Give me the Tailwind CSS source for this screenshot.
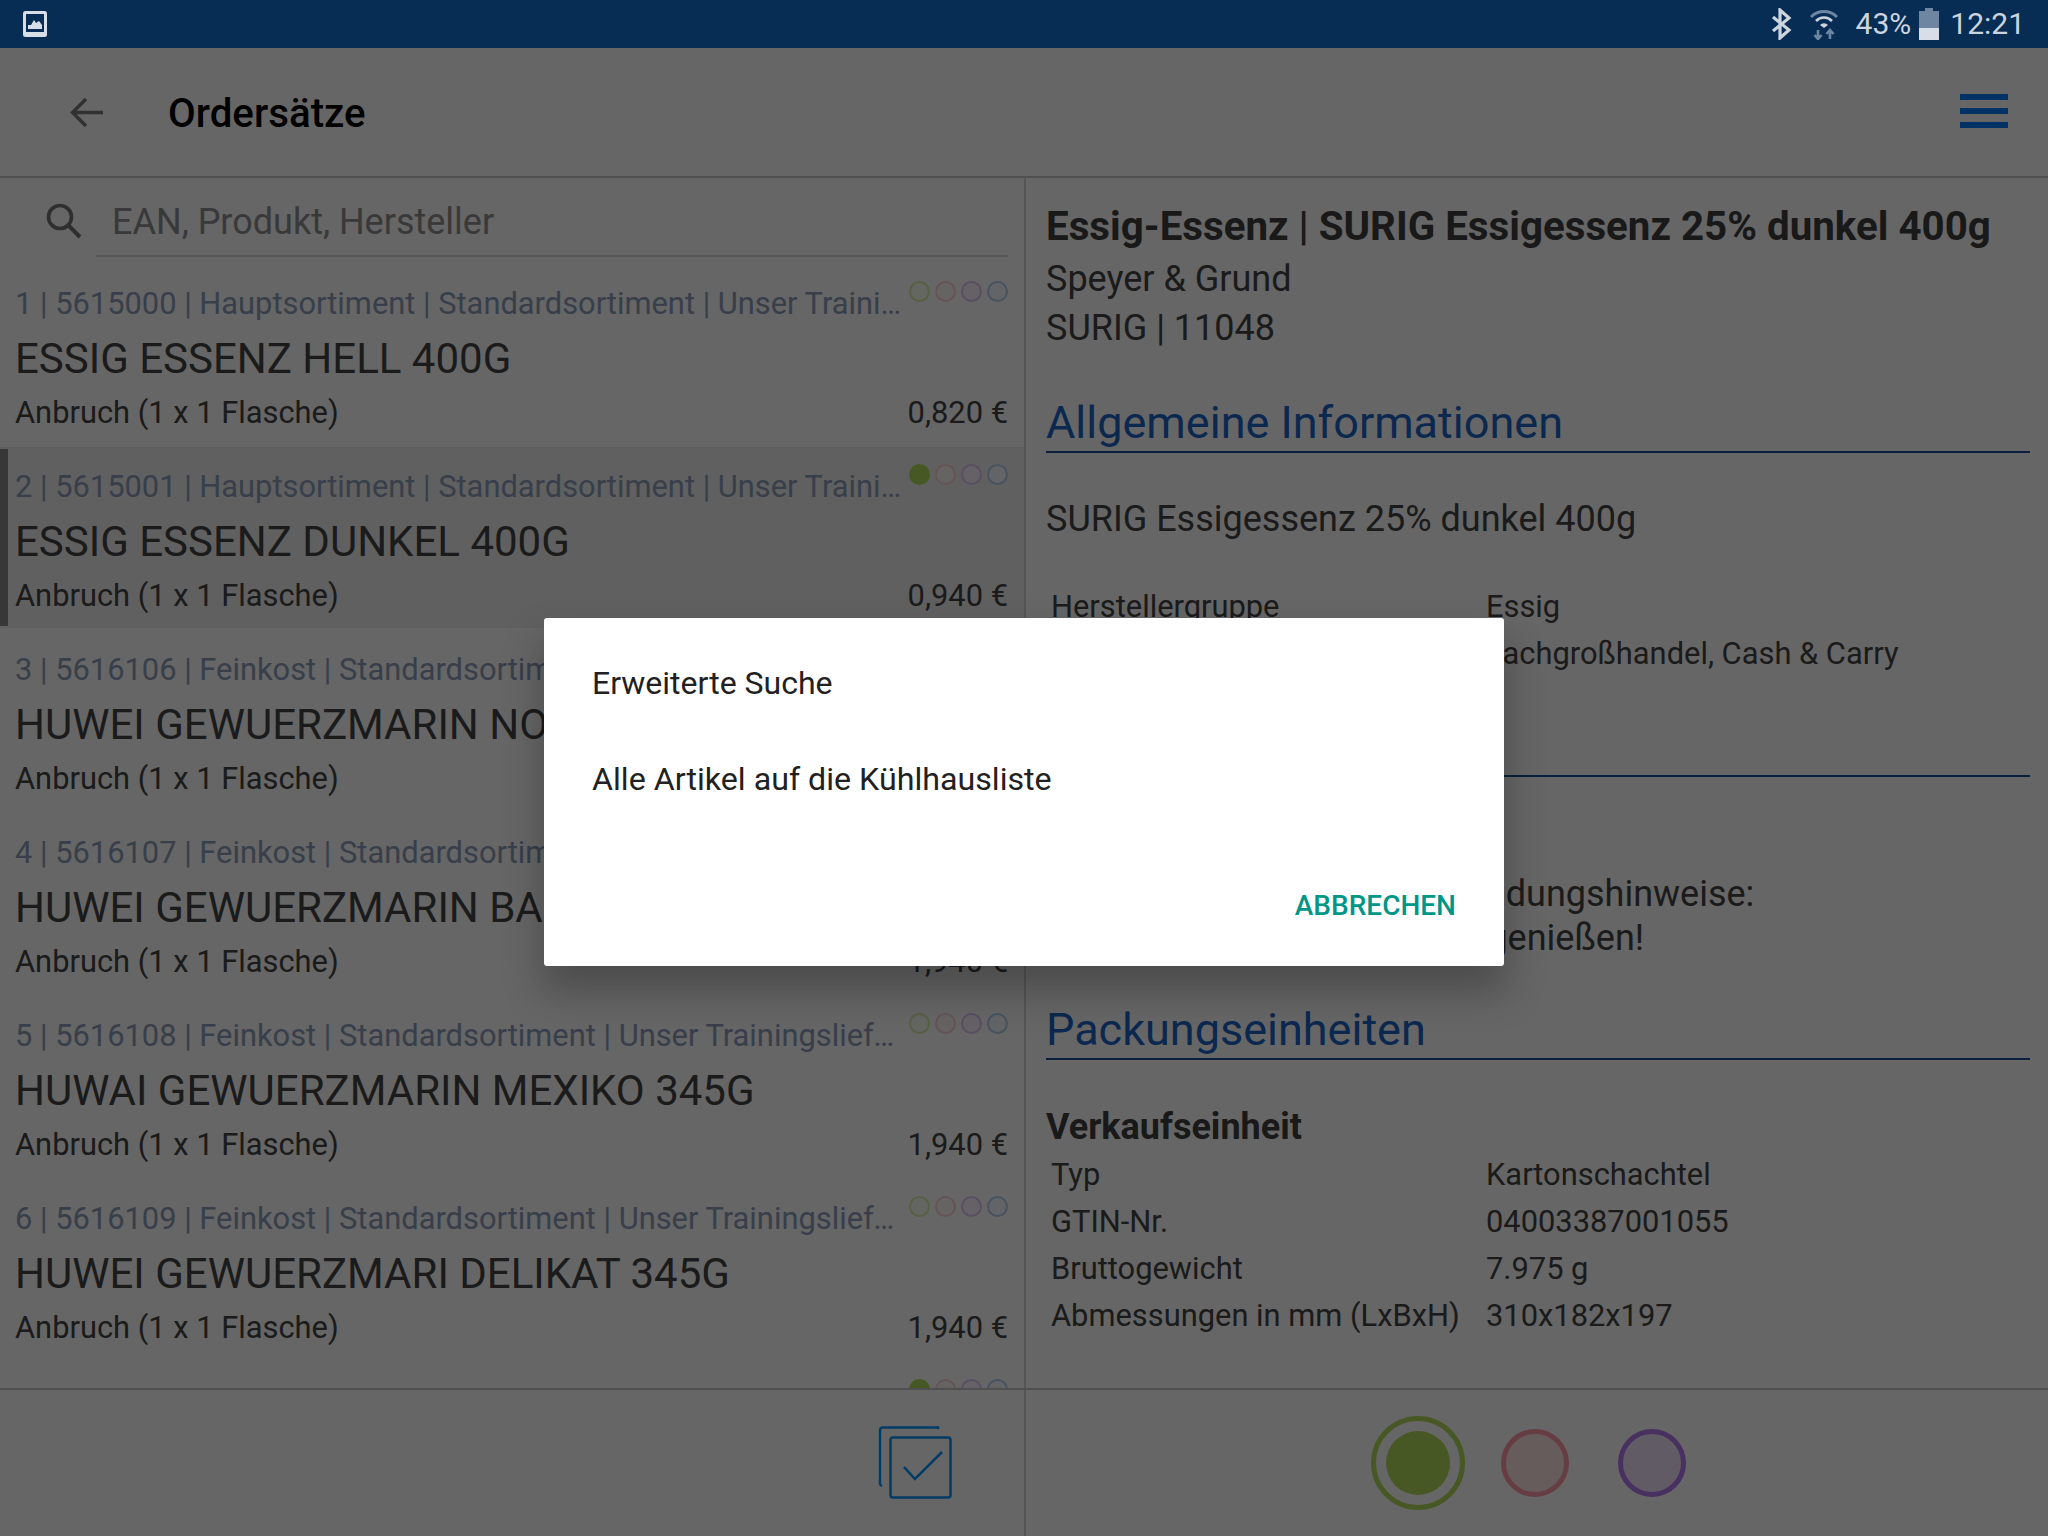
<!DOCTYPE html>
<html lang="de">
<head>
    <meta charset="UTF-8">
    <script src="https://cdn.jsdelivr.net/npm/@tailwindcss/browser@4"></script>
    <title>Ordersätze</title>
</head>
<body class="bg-white font-['Roboto',sans-serif]">
<div class="relative w-[2048px] h-[1536px] overflow-hidden flex flex-col bg-white">

    <!-- status bar -->
    <div class="relative z-20 h-[48px] shrink-0 bg-[#082d54] flex items-center pl-[23px] pr-[23px] text-[#ccd4de] text-[30px]">
        <svg class="w-[24px] h-[26px]" viewBox="0 0 24 26">
            <rect x="0" y="0" width="24" height="26" rx="2.5" fill="#d8dee8"/>
            <rect x="3" y="3" width="18" height="18" fill="#082d54"/>
            <path d="M5 18 L5 14 L8 14 L11 9 L13 12 L16 10 L19 14 L19 18 Z" fill="#d8dee8"/>
        </svg>
        <div class="ml-auto flex items-center">
            <svg class="w-[21px] h-[32px]" viewBox="0 0 21 32">
                <path d="M2 9 L18 22 L9 30 L9 2 L18 10 L2 23" fill="none" stroke="#ccd4de" stroke-width="3.2"/>
            </svg>
            <svg class="ml-[18px] w-[28px] h-[32px]" viewBox="0 0 28 32">
                <path d="M1 9 A18 18 0 0 1 27 9" fill="none" stroke="#6d87a3" stroke-width="3"/>
                <path d="M6 13 A11 11 0 0 1 22 13" fill="none" stroke="#ccd4de" stroke-width="2.6"/>
                <path d="M10 17 A5.5 5.5 0 0 1 18 17 L14 20 Z" fill="#ccd4de"/>
                <path d="M8 22 V30 M4.5 27 L8 31 L11.5 27" fill="none" stroke="#6d87a3" stroke-width="2.6"/>
                <path d="M20 31 V23 M16.5 26 L20 22 L23.5 26" fill="none" stroke="#6d87a3" stroke-width="2.6"/>
            </svg>
            <span class="ml-[18px] leading-none">43%</span>
            <div class="ml-[8px] w-[20px] h-[32px] flex flex-col items-center">
                <div class="w-[8px] h-[3px] bg-[#6f86a2]"></div>
                <div class="w-[20px] h-[17px] bg-[#6f86a2]"></div>
                <div class="w-[20px] h-[12px] bg-[#d8dee8]"></div>
            </div>
            <span class="ml-[11px] leading-none">12:21</span>
        </div>
    </div>

    <!-- app bar -->
    <div class="h-[130px] shrink-0 flex items-center border-b-2 border-[#c8c8c8] pr-[40px]">
        <svg class="ml-[70px] w-[33px] h-[31px]" viewBox="0 0 33 31">
            <path d="M33 15.5 H3 M16 2 L2.5 15.5 L16 29" fill="none" stroke="#7a7a7a" stroke-width="3.4"/>
        </svg>
        <h1 class="ml-[65px] mt-[5px] text-[40.300px] font-medium text-black leading-none">Ordersätze</h1>
        <div class="ml-auto w-[48px] flex flex-col gap-[8px] -mt-[3px]">
            <div class="h-[6px] bg-[#007dff]"></div>
            <div class="h-[6px] bg-[#007dff]"></div>
            <div class="h-[6px] bg-[#007dff]"></div>
        </div>
    </div>

    <!-- main -->
    <div class="h-[1212px] shrink-0 flex border-b-2 border-[#c8c8c8] min-h-0">
        <!-- list -->
        <div class="w-[1026px] shrink-0 border-r-2 border-[#d4d4d4] overflow-hidden">
            <div class="h-[86px] flex items-start pl-[46px] pr-[16px]">
                <svg class="mt-[25px] w-[36px] h-[36px] shrink-0" viewBox="0 0 36 36">
                    <circle cx="14" cy="14" r="11.5" fill="none" stroke="#777777" stroke-width="3.6"/>
                    <path d="M22.5 22.5 L34 34" stroke="#777777" stroke-width="4"/>
                </svg>
                <div class="ml-[14px] flex-1 h-[79px] border-b-2 border-[#d9d9d9] pl-[16px] pt-[23px] text-[36px] leading-[42px] text-[#8f8f8f]">EAN, Produkt, Hersteller</div>
            </div>
            <div>
                <div class="relative h-[183px] border-b-2 border-white pl-[15px] pr-[16px]">
                    <div class="flex justify-between items-start">
                        <div class="mt-[21px] w-[889px] truncate text-[30.850px] leading-[38px] text-[#8c9db8]">1 | 5615000 | Hauptsortiment | Standardsortiment | Unser Trainingslieferant</div>
                        <div class="mt-[17px] flex gap-[5px]">
                            <div class="w-[21px] h-[21px] rounded-full border-2 border-[#dcf0a8] bg-[#fafff5]"></div>
                            <div class="w-[21px] h-[21px] rounded-full border-2 border-[#ffd0d8] bg-[#fff8f8]"></div>
                            <div class="w-[21px] h-[21px] rounded-full border-2 border-[#e0c4f4] bg-[#fbf5ff]"></div>
                            <div class="w-[21px] h-[21px] rounded-full border-2 border-[#b4d0f0] bg-[#f5faff]"></div>
                        </div>
                    </div>
                    <div class="mt-[12px] text-[42px] leading-[48px] text-[#444444]">ESSIG ESSENZ HELL 400G</div>
                    <div class="mt-[11px] flex justify-between text-[30.850px] leading-[38px] text-[#444444]"><span>Anbruch (1 x 1 Flasche)</span><span>0,820 €</span></div>
                </div>
                <div class="relative h-[183px] border-b-2 border-white bg-[#f0f0f0] pl-[15px] pr-[16px]">
                    <div class="absolute left-0 top-[2px] bottom-[2px] w-[8px] bg-[#8a8a8a]"></div>
                    <div class="flex justify-between items-start">
                        <div class="mt-[21px] w-[889px] truncate text-[30.850px] leading-[38px] text-[#8c9db8]">2 | 5615001 | Hauptsortiment | Standardsortiment | Unser Trainingslieferant</div>
                        <div class="mt-[17px] flex gap-[5px]">
                            <div class="w-[21px] h-[21px] rounded-full bg-[#b4dc5a]"></div>
                            <div class="w-[21px] h-[21px] rounded-full border-2 border-[#ffd0d8] bg-[#fff8f8]"></div>
                            <div class="w-[21px] h-[21px] rounded-full border-2 border-[#e0c4f4] bg-[#fbf5ff]"></div>
                            <div class="w-[21px] h-[21px] rounded-full border-2 border-[#b4d0f0] bg-[#f5faff]"></div>
                        </div>
                    </div>
                    <div class="mt-[12px] text-[42px] leading-[48px] text-[#444444]">ESSIG ESSENZ DUNKEL 400G</div>
                    <div class="mt-[11px] flex justify-between text-[30.850px] leading-[38px] text-[#444444]"><span>Anbruch (1 x 1 Flasche)</span><span>0,940 €</span></div>
                </div>
                <div class="relative h-[183px] border-b-2 border-white pl-[15px] pr-[16px]">
                    <div class="flex justify-between items-start">
                        <div class="mt-[21px] w-[889px] truncate text-[30.850px] leading-[38px] text-[#8c9db8]">3 | 5616106 | Feinkost | Standardsortiment | Unser Trainingslieferant</div>
                        <div class="mt-[17px] flex gap-[5px]">
                            <div class="w-[21px] h-[21px] rounded-full border-2 border-[#dcf0a8] bg-[#fafff5]"></div>
                            <div class="w-[21px] h-[21px] rounded-full border-2 border-[#ffd0d8] bg-[#fff8f8]"></div>
                            <div class="w-[21px] h-[21px] rounded-full border-2 border-[#e0c4f4] bg-[#fbf5ff]"></div>
                            <div class="w-[21px] h-[21px] rounded-full border-2 border-[#b4d0f0] bg-[#f5faff]"></div>
                        </div>
                    </div>
                    <div class="mt-[12px] text-[42px] leading-[48px] text-[#444444]">HUWEI GEWUERZMARIN NORMAL 345G</div>
                    <div class="mt-[11px] flex justify-between text-[30.850px] leading-[38px] text-[#444444]"><span>Anbruch (1 x 1 Flasche)</span><span>1,940 €</span></div>
                </div>
                <div class="relative h-[183px] border-b-2 border-white pl-[15px] pr-[16px]">
                    <div class="flex justify-between items-start">
                        <div class="mt-[21px] w-[889px] truncate text-[30.850px] leading-[38px] text-[#8c9db8]">4 | 5616107 | Feinkost | Standardsortiment | Unser Trainingslieferant</div>
                        <div class="mt-[17px] flex gap-[5px]">
                            <div class="w-[21px] h-[21px] rounded-full border-2 border-[#dcf0a8] bg-[#fafff5]"></div>
                            <div class="w-[21px] h-[21px] rounded-full border-2 border-[#ffd0d8] bg-[#fff8f8]"></div>
                            <div class="w-[21px] h-[21px] rounded-full border-2 border-[#e0c4f4] bg-[#fbf5ff]"></div>
                            <div class="w-[21px] h-[21px] rounded-full border-2 border-[#b4d0f0] bg-[#f5faff]"></div>
                        </div>
                    </div>
                    <div class="mt-[12px] text-[42px] leading-[48px] text-[#444444]">HUWEI GEWUERZMARIN BALI 345G</div>
                    <div class="mt-[11px] flex justify-between text-[30.850px] leading-[38px] text-[#444444]"><span>Anbruch (1 x 1 Flasche)</span><span>1,940 €</span></div>
                </div>
                <div class="relative h-[183px] border-b-2 border-white pl-[15px] pr-[16px]">
                    <div class="flex justify-between items-start">
                        <div class="mt-[21px] w-[889px] truncate text-[30.850px] leading-[38px] text-[#8c9db8]">5 | 5616108 | Feinkost | Standardsortiment | Unser Trainingslieferant</div>
                        <div class="mt-[17px] flex gap-[5px]">
                            <div class="w-[21px] h-[21px] rounded-full border-2 border-[#dcf0a8] bg-[#fafff5]"></div>
                            <div class="w-[21px] h-[21px] rounded-full border-2 border-[#ffd0d8] bg-[#fff8f8]"></div>
                            <div class="w-[21px] h-[21px] rounded-full border-2 border-[#e0c4f4] bg-[#fbf5ff]"></div>
                            <div class="w-[21px] h-[21px] rounded-full border-2 border-[#b4d0f0] bg-[#f5faff]"></div>
                        </div>
                    </div>
                    <div class="mt-[12px] text-[42px] leading-[48px] text-[#444444]">HUWAI GEWUERZMARIN MEXIKO 345G</div>
                    <div class="mt-[11px] flex justify-between text-[30.850px] leading-[38px] text-[#444444]"><span>Anbruch (1 x 1 Flasche)</span><span>1,940 €</span></div>
                </div>
                <div class="relative h-[183px] border-b-2 border-white pl-[15px] pr-[16px]">
                    <div class="flex justify-between items-start">
                        <div class="mt-[21px] w-[889px] truncate text-[30.850px] leading-[38px] text-[#8c9db8]">6 | 5616109 | Feinkost | Standardsortiment | Unser Trainingslieferant</div>
                        <div class="mt-[17px] flex gap-[5px]">
                            <div class="w-[21px] h-[21px] rounded-full border-2 border-[#dcf0a8] bg-[#fafff5]"></div>
                            <div class="w-[21px] h-[21px] rounded-full border-2 border-[#ffd0d8] bg-[#fff8f8]"></div>
                            <div class="w-[21px] h-[21px] rounded-full border-2 border-[#e0c4f4] bg-[#fbf5ff]"></div>
                            <div class="w-[21px] h-[21px] rounded-full border-2 border-[#b4d0f0] bg-[#f5faff]"></div>
                        </div>
                    </div>
                    <div class="mt-[12px] text-[42px] leading-[48px] text-[#444444]">HUWEI GEWUERZMARI DELIKAT 345G</div>
                    <div class="mt-[11px] flex justify-between text-[30.850px] leading-[38px] text-[#444444]"><span>Anbruch (1 x 1 Flasche)</span><span>1,940 €</span></div>
                </div>
                <div class="relative h-[183px] pl-[15px] pr-[16px]">
                    <div class="flex justify-between items-start">
                        <div class="mt-[21px] w-[889px] truncate text-[30.850px] leading-[38px] text-[#8c9db8]">7 | 5616110 | Feinkost | Standardsortiment | Unser Trainingslieferant</div>
                        <div class="mt-[17px] flex gap-[5px]">
                            <div class="w-[21px] h-[21px] rounded-full bg-[#b4dc5a]"></div>
                            <div class="w-[21px] h-[21px] rounded-full border-2 border-[#ffd0d8] bg-[#fff8f8]"></div>
                            <div class="w-[21px] h-[21px] rounded-full border-2 border-[#e0c4f4] bg-[#fbf5ff]"></div>
                            <div class="w-[21px] h-[21px] rounded-full border-2 border-[#b4d0f0] bg-[#f5faff]"></div>
                        </div>
                    </div>
                </div>
            </div>
        </div>

        <!-- detail -->
        <div class="flex-1 min-w-0 overflow-hidden pl-[20px] pr-[18px] pt-[24px] text-[#444444]">
            <div class="text-[40.300px] leading-[49px] font-bold text-[#404040] whitespace-nowrap">Essig-Essenz | SURIG Essigessenz 25% dunkel 400g</div>
            <div class="mt-[4px] text-[36px] leading-[49px]">Speyer &amp; Grund</div>
            <div class="text-[36px] leading-[49px]">SURIG | 11048</div>
            <div class="mt-[40px] text-[45px] leading-[60px] text-[#1b64c8] border-b-2 border-[#1b4f98] h-[60px]">Allgemeine Informationen</div>
            <div class="mt-[45px] text-[36px] leading-[42px]">SURIG Essigessenz 25% dunkel 400g</div>
            <div class="mt-[43px] text-[30.850px] leading-[47px]">
                <div class="flex"><span class="w-[440px] pl-[5px]">Herstellergruppe</span><span>Essig</span></div>
                <div class="flex"><span class="w-[440px] pl-[5px]">Vertriebsweg</span><span>Fachgroßhandel, Cash &amp; Carry</span></div>
            </div>
            <div class="mt-[40px] text-[45px] leading-[60px] text-[#1b64c8] border-b-2 border-[#1b4f98] h-[60px]">Zusatzinformationen</div>
            <div class="mt-[95px] text-[36px] leading-[44px] whitespace-nowrap">
                <div>Aufbewahrungs- und Verwendungshinweise:</div>
                <div>Nach dem Anbruch zeitnah genießen!</div>
            </div>
            <div class="mt-[40px] text-[45px] leading-[60px] text-[#1b64c8] border-b-2 border-[#1b4f98] h-[60px]">Packungseinheiten</div>
            <div class="mt-[46px] text-[36px] leading-[42px] font-bold text-[#404040]">Verkaufseinheit</div>
            <div class="mt-[3px] text-[30.850px] leading-[47px]">
                <div class="flex"><span class="w-[440px] pl-[5px]">Typ</span><span>Kartonschachtel</span></div>
                <div class="flex"><span class="w-[440px] pl-[5px]">GTIN-Nr.</span><span>04003387001055</span></div>
                <div class="flex"><span class="w-[440px] pl-[5px]">Bruttogewicht</span><span>7.975 g</span></div>
                <div class="flex"><span class="w-[440px] pl-[5px]">Abmessungen in mm (LxBxH)</span><span>310x182x197</span></div>
            </div>
            <div class="mt-[49px] text-[36px] leading-[42px] font-bold text-[#404040] whitespace-nowrap">Kleinste Verpackungseinheit</div>
        </div>
    </div>

    <!-- footer -->
    <div class="flex-1 flex">
        <div class="w-[1026px] shrink-0 border-r-2 border-[#d4d4d4] flex items-start justify-end pr-[72px] pt-[35px]">
            <svg class="w-[74px] h-[74px]" viewBox="0 0 74 74">
                <path d="M60 4 V2.5 H5 Q2 2.5 2 5.500 V59 Q2 60 4 61" fill="none" stroke="#0096ff" stroke-width="2.500"/>
                <rect x="12.500" y="12.500" width="60" height="60" rx="2.500" fill="none" stroke="#0096ff" stroke-width="2.500"/>
                <path d="M26 42 L37 54 L64 27" fill="none" stroke="#0096ff" stroke-width="2.500"/>
            </svg>
        </div>
        <div class="flex-1 flex items-center pl-[345px] -mt-[1px]">
            <div class="w-[94px] h-[94px] rounded-full border-[5px] border-[#b4dc5a] flex items-center justify-center">
                <div class="w-[64px] h-[64px] rounded-full bg-[#b4dc5a]"></div>
            </div>
            <div class="ml-[36px] w-[68px] h-[68px] rounded-full border-[5px] border-[#ff9aa8] bg-[#ffe6e6]"></div>
            <div class="ml-[49px] w-[68px] h-[68px] rounded-full border-[5px] border-[#b478f0] bg-[#f0e4fa]"></div>
        </div>
    </div>

    <!-- dim layer and dialog -->
    <div class="absolute left-0 right-0 top-[48px] bottom-0 z-10 bg-black/60"></div>
    <div class="absolute z-20 left-[544px] top-[618px] w-[960px] h-[348px] bg-white rounded-[3px] shadow-[0_24px_38px_3px_rgba(0,0,0,0.25)] flex flex-col pl-[48px] pr-[48px]">
        <div class="mt-[46px] text-[32px] leading-[38px] text-[#212121]">Erweiterte Suche</div>
        <div class="mt-[58px] text-[32.200px] leading-[38px] text-[#212121]">Alle Artikel auf die Kühlhausliste</div>
        <div class="mt-auto mb-[43px] self-end text-[28px] leading-[34px] font-medium text-[#009688]">ABBRECHEN</div>
    </div>
</div>
</body>
</html>
